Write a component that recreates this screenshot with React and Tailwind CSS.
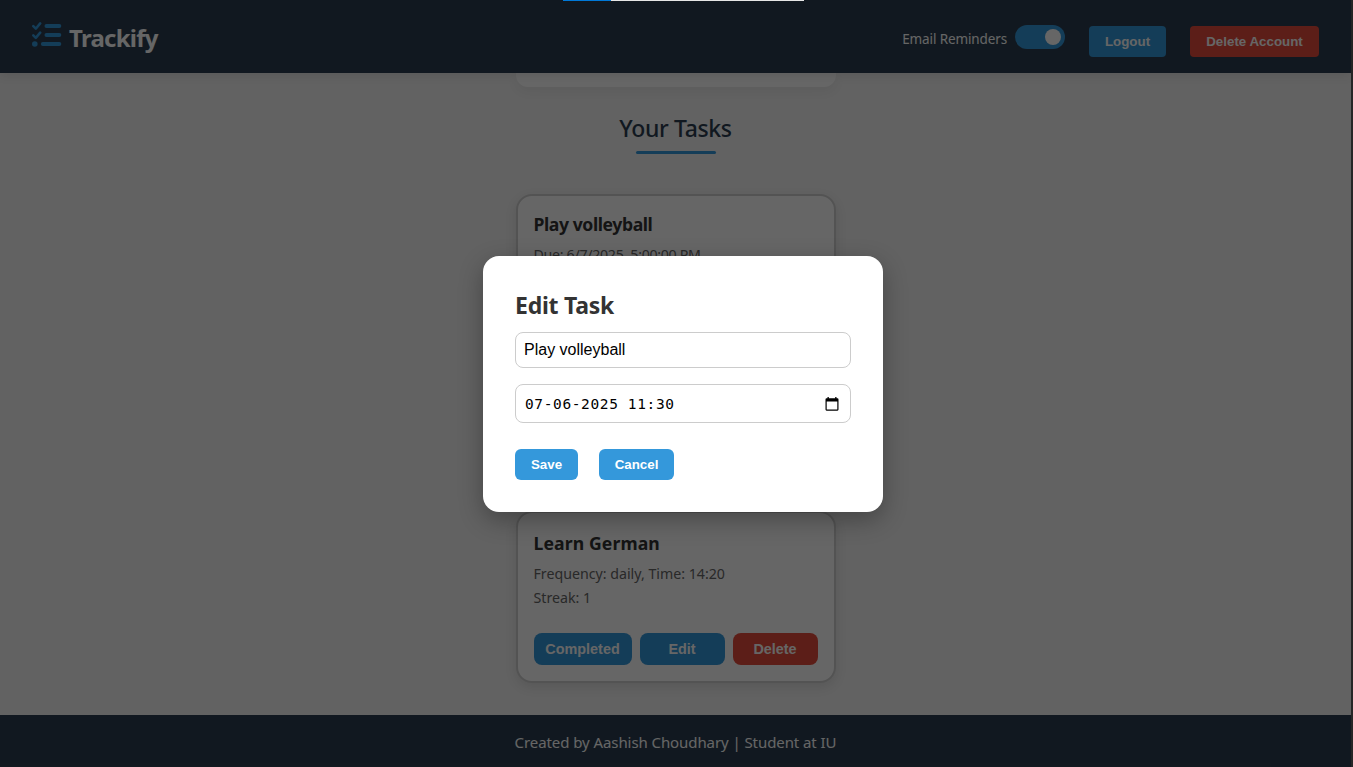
const ui = "font-['Noto_Sans','Open_Sans',sans-serif]";
const arial = "font-['Liberation_Sans',Arial,sans-serif]";

function ChecklistIcon() {
  return (
    <svg width="30" height="28" viewBox="0 0 30 28" fill="none" stroke="currentColor" strokeLinecap="round" strokeLinejoin="round" className="mb-[4px] text-[#3498db]">
      <path d="M14.4 5H27.4M14.4 14H27.4M10.8 23H27.4" strokeWidth="3.8" />
      <path d="M1.3 5.2L3.8 7.7L8.2 2.4M1.3 14.4L3.8 16.9L8.2 11.6" strokeWidth="2.5" />
      <circle cx="2.8" cy="23" r="2.8" fill="currentColor" stroke="none" />
    </svg>
  );
}

function Header() {
  return (
    <header className="relative z-10 flex h-[73px] shrink-0 items-center justify-between bg-[#2c3e50] pl-8 pr-[32px] text-white shadow-[0_2px_10px_rgba(0,0,0,0.1)]">
      <div className="flex items-center gap-[7px] pt-px">
        <ChecklistIcon />
        <span className="pt-[2px] text-[24px] leading-8 font-bold tracking-[-0.75px]">Trackify</span>
      </div>
      <div className="flex items-center">
        <span className="mr-2 pt-[4px] text-[13.5px] leading-5 tracking-[-0.12px] whitespace-nowrap">Email Reminders</span>
        <span className="mr-6 flex h-6 w-[50px] items-center justify-end rounded-full bg-[#3498db] pr-1">
          <span className="size-4 rounded-full bg-white" />
        </span>
        <button className={`mt-[9px] mr-6 h-[31px] w-[77px] rounded-[4px] bg-[#3498db] pt-px text-[13.33px] font-bold ${arial}`}>Logout</button>
        <button className={`mt-[9px] h-[31px] w-[129px] rounded-[4px] bg-[#e74c3c] pt-px text-[13.33px] font-bold ${arial}`}>Delete Account</button>
      </div>
    </header>
  );
}

function TaskCard({ title, titleClass, lines, className }) {
  return (
    <article className={`flex h-[172px] w-[320px] shrink-0 flex-col rounded-[16px] border-2 border-[#d0d0d0] bg-white px-4 shadow-[0_4px_12px_rgba(0,0,0,0.1)] ${className}`}>
      <h3 className={`text-[17.6px] leading-6 font-bold text-[#333] ${titleClass}`}>{title}</h3>
      <div className="mt-[7px] text-[14.2px] leading-6 text-[#666]">
        {lines.map((line) => (
          <p key={line.text} className={`whitespace-nowrap ${line.tracking}`}>{line.text}</p>
        ))}
      </div>
      <div className={`mt-auto mb-4 flex gap-2 text-[14.4px] font-bold text-white ${arial}`}>
        <button className="h-8 w-[98px] rounded-[8px] bg-[#3498db] pt-px">Completed</button>
        <button className="h-8 w-[85px] rounded-[8px] bg-[#3498db] pt-px">Edit</button>
        <button className="h-8 w-[85px] rounded-[8px] bg-[#e74c3c] pt-px">Delete</button>
      </div>
    </article>
  );
}

function EditTaskDialog() {
  return (
    <div className="flex h-64 w-[400px] flex-col rounded-[16px] bg-white px-8 pt-[33px] shadow-[0_8px_24px_rgba(0,0,0,0.3)]">
      <h2 className="text-[23px] leading-8 font-bold tracking-[-0.25px] text-[#333]">Edit Task</h2>
      <div className={`mt-[11px] flex h-9 items-center rounded-[8px] border border-[#ccc] px-2 pb-px text-[16px] text-black ${arial}`}>Play volleyball</div>
      <div className="mt-4 flex h-[39px] items-center justify-between rounded-[8px] border border-[#ccc] pt-[2px] pl-[9px] pr-[11px] text-black">
        <span className="font-['DejaVu_Sans_Mono',monospace] text-[14.5px] tracking-[0.62px] whitespace-pre">07-06-2025 11:30</span>
        <svg width="14" height="14" viewBox="0 0 14 14" className="mb-px">
          <path fillRule="evenodd" d="M2.5 0H3.8V1.3H10.2V0H11.5V1.3H12.4Q13.5 1.3 13.5 2.4V12.6Q13.5 13.7 12.4 13.7H1.6Q.5 13.7 .5 12.6V2.4Q.5 1.3 1.6 1.3H2.5ZM1.7 4.5V12.5H12.3V4.5Z" fill="currentColor" />
        </svg>
      </div>
      <div className={`mt-[26px] flex gap-[21px] text-[13.33px] font-bold text-white ${arial}`}>
        <button className="h-[31px] w-[63px] rounded-[6px] bg-[#3498db]">Save</button>
        <button className="h-[31px] w-[75px] rounded-[6px] bg-[#3498db]">Cancel</button>
      </div>
    </div>
  );
}

export default function App() {
  return (
    <div className={`relative flex h-[767px] w-[1353px] overflow-hidden bg-[#262626] ${ui}`}>
      <div className="flex w-[1351px] flex-col bg-[#f4f4f4]">
        <Header />
        <main className="flex flex-1 flex-col items-center">
          <div className="h-[14px] w-[320px] shrink-0 rounded-b-[12px] bg-white shadow-[0_4px_12px_rgba(0,0,0,0.06)]" />
          <h2 className="mt-[25px] mb-px text-[23px] leading-8 font-medium tracking-[-0.35px] text-[#2c3e50]">Your Tasks</h2>
          <div className="mt-[6px] h-[3px] w-20 shrink-0 rounded-[2px] bg-[#3498db]" />
          <TaskCard
            className="mt-10 pt-4"
            title="Play volleyball"
            titleClass="tracking-[-0.42px]"
            lines={[{ text: "Due: 6/7/2025, 5:00:00 PM", tracking: "tracking-[-0.3px]" }]}
          />
          <TaskCard
            className="mt-[145px] pt-[18px]"
            title="Learn German"
            titleClass="tracking-[0.12px]"
            lines={[
              { text: "Frequency: daily, Time: 14:20", tracking: "tracking-[0px]" },
              { text: "Streak: 1", tracking: "tracking-[0px]" },
            ]}
          />
        </main>
        <footer className="flex h-[52px] shrink-0 items-center justify-center bg-[#2c3e50] pt-[3px] text-[15px] tracking-[-0.08px] whitespace-nowrap text-white">
          Created by Aashish Choudhary | Student at IU
        </footer>
      </div>
      <div className="absolute top-0 left-0 z-20 flex h-full w-[1351px] items-center justify-center bg-black/60 pt-px pl-[15px]">
        <EditTaskDialog />
      </div>
      <div className="absolute top-0 left-[563px] z-30 flex h-px w-[241px] bg-[#e6e6e6]">
        <div className="w-12 bg-[#0078d7]" />
      </div>
    </div>
  );
}
